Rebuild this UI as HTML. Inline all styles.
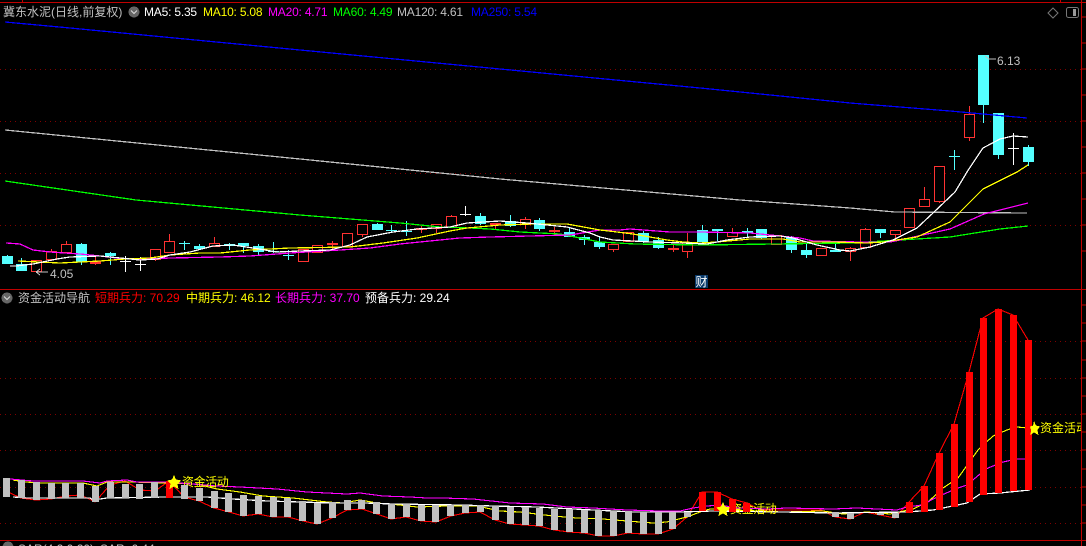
<!DOCTYPE html>
<html><head><meta charset="utf-8"><style>
html,body{margin:0;padding:0;background:#000;width:1086px;height:546px;overflow:hidden}
svg{display:block;position:absolute;left:0;top:0}
text{font-family:"Liberation Sans","WenQuanYi Zen Hei","Noto Sans CJK SC",sans-serif;font-size:12px}
.l{fill:none;stroke-linejoin:miter;stroke-width:1.25}
.m{letter-spacing:-.2px}
.s{letter-spacing:-.4px}
</style></head><body>
<svg width="1086" height="546" viewBox="0 0 1086 546" xmlns="http://www.w3.org/2000/svg" shape-rendering="crispEdges">
<rect width="1086" height="546" fill="#000"/>
<!-- grid -->
<path d="M0 69.5H1081M0 121.5H1081M0 173.5H1081M0 225.5H1081M0 341.5H1081M0 378.5H1081M0 414.5H1081M0 450.5H1081M0 487.5H1081M0 523.5H1081" stroke="#800000" stroke-dasharray="1 4" fill="none"/>
<!-- red candles -->
<path fill="none" stroke="#ff3232" stroke-width="1.3" d="M51.5 249V251M51.5 259V261M66.5 241V244M155.5 259V261M169.5 234V241M214.5 237V243M362.5 234V237M436.5 228V233M451.5 215V216M525.5 217V219M525.5 224V229M613.5 249V252M687.5 233V242M687.5 251V258M732.5 228V232M732.5 236V237M850.5 247V248M850.5 251V261M865.5 228V229M895.5 234V238M909.5 227V228M924.5 187V199M924.5 206V207M939.5 201V203M969.5 106V114M969.5 137V141M95.5 256V265M332.5 241V250M421.5 226V233M495.5 225V230M554.5 227V235M673.5 245V252"/>
<path fill="#000" stroke="#ff3232" stroke-width="1.3" d="M31.5 260.5h10v11h-10zM46.5 251.5h10v8h-10zM61.5 244.5h10v8h-10zM150.5 249.5h10v10h-10zM164.5 241.5h10v11h-10zM209.5 243.5h10v3h-10zM298.5 249.5h10v12h-10zM312.5 245.5h10v7h-10zM342.5 233.5h10v13h-10zM357.5 224.5h10v10h-10zM431.5 224.5h10v4h-10zM446.5 216.5h10v11h-10zM520.5 219.5h10v5h-10zM608.5 244.5h10v5h-10zM623.5 232.5h10v9h-10zM682.5 242.5h10v9h-10zM727.5 232.5h10v4h-10zM771.5 235.5h10v9h-10zM816.5 248.5h10v7h-10zM845.5 248.5h10v3h-10zM860.5 229.5h10v18h-10zM890.5 230.5h10v4h-10zM904.5 208.5h10v19h-10zM919.5 199.5h10v7h-10zM934.5 166.5h10v35h-10zM964.5 114.5h10v23h-10z"/>
<path fill="#ff3232" d="M90 261h11v3h-11zM327 243h11v2h-11zM416 228h11v2h-11zM490 223h11v2h-11zM549 230h11v2h-11zM668 248h11v2h-11z"/>
<!-- cyan candles -->
<path fill="none" stroke="#54ffff" stroke-width="1.3" d="M7.5 255V256M21.5 258V264M81.5 243V265M110.5 252V265M184.5 241V250M199.5 244V249M229.5 243V250M243.5 243V253M258.5 244V255M273.5 242V253M288.5 250V260M377.5 223V230M391.5 225V233M406.5 221V236M480.5 213V225M510.5 215V227M539.5 218V231M569.5 227V237M584.5 235V245M599.5 237V249M643.5 231V243M658.5 237V249M702.5 225V243M717.5 231V241M747.5 228V237M761.5 229V239M791.5 236V253M806.5 244V258M835.5 244V252M880.5 233V238M954.5 150V170M983.5 105V123M998.5 155V159M1028.5 145V166M179 243.5h11M268 251.5h11M283 255.5h11M386 230.5h11M401 231.5h11M949 156.5h11"/>
<path fill="#54ffff" d="M2 256h11v8h-11zM16 264h11v7h-11zM76 244h11v18h-11zM105 253h11v3h-11zM194 246h11v3h-11zM224 244h11v2h-11zM238 243h11v3h-11zM253 246h11v6h-11zM372 224h11v6h-11zM475 216h11v8h-11zM505 221h11v5h-11zM534 220h11v9h-11zM564 232h11v5h-11zM579 237h11v3h-11zM594 242h11v5h-11zM638 233h11v9h-11zM653 240h11v8h-11zM697 230h11v12h-11zM712 229h11v2h-11zM742 231h11v2h-11zM756 229h11v9h-11zM786 237h11v13h-11zM801 250h11v5h-11zM830 250h11v2h-11zM875 229h11v4h-11zM978 55h11v50h-11zM993 113h11v42h-11zM1023 147h11v15h-11z"/>
<!-- white dojis -->
<path fill="none" stroke="#fff" stroke-width="1.3" d="M125.5 256V272M120 261.5h11M140.5 257V271M135 264.5h11M465.5 206V216M460 214.5h11M1013.5 133V165M1008 148.5h11"/>
<!-- MA lines main -->
<polyline class="l" stroke="#0000ff" points="5,22 70,28 300,50 500,69 700,88 850,103 950,111 1027,118"/>
<polyline class="l" stroke="#c0c0c0" points="5,130 300,159 500,179 740,200 850,208 895,212 1027,213"/>
<polyline class="l" stroke="#00ff00" points="5,181 136,200 300,215 350,219 400,223 440,227 470,228 490,229 520,232 560,234 600,242 635,244 700,245 850,243 900,240 950,237 1000,229 1028,226"/>
<polyline class="l" stroke="#ff00ff" points="6,243 20,244 33,250 50,252 80,254 100,256 125,259 150,259 170,258 220,257 250,256 290,253 340,250 370,248 400,244 430,241 460,238 490,237 530,236 570,235 600,230 620,230 630,229 670,232 700,232 750,233 800,238 813,241 860,242 890,242 900,240 950,229 984,214 1028,203"/>
<polyline class="l" stroke="#ffff00" points="18,261 60,263 100,261 125,259 150,258 170,255 200,253 220,253 250,250 290,248 350,247 383,243 417,238 450,231 467,228 500,225 533,224 567,224 600,230 617,232 633,234 667,240 683,242 700,243 717,242 750,239 783,239 800,242 833,242 867,243 883,242 917,237 950,222 967,205 983,189 1017,172 1028,165"/>
<polyline class="l" stroke="#ffffff" points="10,266 16,266 33,264 57,259 70,257 100,256 120,258 140,260 157,259 170,255 190,252 213,246 233,245 253,248 277,252 300,251 330,250 350,245 367,237 393,232 417,229 450,227 467,223 500,221 527,223 567,227 590,233 600,237 613,240 633,241 650,242 683,243 707,244 727,240 750,237 780,236 793,238 817,245 840,250 850,251 870,247 893,240 917,228 933,213 955,192 967,172 983,148 1000,139 1013,136 1028,137"/>
<!-- annotations -->
<path fill="none" stroke="#c0c0c0" d="M985 56l4 3h7"/>
<text x="997" y="65" fill="#c0c0c0">6.13</text>
<path fill="none" stroke="#c0c0c0" d="M36 272h12M36 272l4-3M36 272l4 3"/>
<text x="50" y="278" fill="#c0c0c0">4.05</text>
<rect x="695" y="275" width="13" height="13" fill="#0a3a6a"/>
<text x="695.5" y="286" fill="#fff">财</text>
<!-- lower pane lines (behind bars) -->
<polyline class="l" stroke="#ff0000" style="stroke-width:1.1" points="10,493 21,498 36,500 51,499 66,496 81,495 95,502 110,485 125,481 140,490 155,491 169,481 184,497 199,501 214,508 229,512 243,516 258,514 273,517 288,517 303,521 317,524 332,518 347,510 362,509 377,514 391,519 406,517 421,521 436,522 451,516 465,513 480,512 495,520 510,524 525,525 539,526 554,530 569,532 584,533 599,536 613,536 628,533 643,534 658,534 673,529 687,517 702,492 717,492 732,499 747,503 761,510 776,510 791,510 806,510 821,510 835,517 850,519 865,512 880,515 895,518 909,502 924,486 939,453 954,424 969,372 983,318 998,309 1013,315 1028,340"/>
<polyline class="l" stroke="#ffff00" style="stroke-width:1.1" points="13,480 25,482 43,483 83,483 97,486 107,482 133,482 160,483 197,484 217,489 240,492 263,496 293,498 327,502 343,503 360,500 377,503 400,505 417,507 447,506 477,506 500,511 520,512 553,516 577,518 603,519 627,521 653,523 667,522 687,517 700,512 710,509 783,512 823,511 843,514 867,512 890,514 913,509 928,502 943,488 958,478 978,450 993,436 1007,430 1017,427 1028,428"/>
<polyline class="l" stroke="#ff00ff" style="stroke-width:1.1" points="10,479 33,481 83,481 100,483 107,481 127,480 137,482 167,482 217,486 240,487 277,489 307,492 347,494 360,493 383,496 410,497 427,498 443,498 473,499 510,503 543,504 567,507 593,508 627,510 660,511 680,511 693,508 707,506 720,505 737,508 767,509 787,508 833,509 857,508 897,510 907,507 922,505 937,497 958,488 967,485 980,474 988,468 1003,462 1017,459 1028,459"/>
<polyline class="l" stroke="#ffffff" points="13,497 27,498 90,498 93,500 107,498 167,497 207,497 233,499 267,501 300,502 333,503 365,503 393,504 460,505 493,506 537,507 593,510 633,512 680,512 713,511 783,512 833,513 907,512 933,510 943,508 967,503 980,494 1000,493 1030,490"/>
<!-- signal text -->
<text class="s" x="182" y="486" fill="#ffff00">资金活动</text>
<text class="s" x="730" y="513" fill="#ffff00">资金活动</text>
<text x="1040" y="432" fill="#ffff00">资金活动</text>
<!-- lower bars gray -->
<path fill="#c0c0c0" d="M3 478h7v19h-7zM18 480h7v18h-7zM33 482h7v18h-7zM48 483h7v16h-7zM62 483h7v15h-7zM77 483h7v15h-7zM92 486h7v16h-7zM107 482h7v16h-7zM122 484h7v14h-7zM136 484h7v15h-7zM151 482h7v16h-7zM181 485h7v14h-7zM196 488h7v13h-7zM211 491h7v17h-7zM225 493h7v19h-7zM240 495h7v21h-7zM255 496h7v18h-7zM270 497h7v20h-7zM284 498h7v19h-7zM299 501h7v20h-7zM314 503h7v21h-7zM329 502h7v16h-7zM344 500h7v10h-7zM358 500h7v9h-7zM373 502h7v12h-7zM388 504h7v15h-7zM403 504h7v13h-7zM418 505h7v16h-7zM432 505h7v17h-7zM447 505h7v11h-7zM462 505h7v8h-7zM477 505h7v7h-7zM492 506h7v14h-7zM507 507h7v17h-7zM522 507h7v18h-7zM536 508h7v18h-7zM551 509h7v21h-7zM566 509h7v23h-7zM581 510h7v23h-7zM595 510h7v26h-7zM610 511h7v25h-7zM625 511h7v22h-7zM640 512h7v22h-7zM655 512h7v22h-7zM669 512h7v17h-7zM684 512h7v5h-7zM832 512h7v5h-7zM847 513h7v6h-7zM877 513h7v2h-7zM892 513h7v5h-7z"/>
<!-- lower bars red -->
<path fill="#ff0000" d="M166 481h7v17h-7zM699 492h7v19h-7zM714 492h7v19h-7zM729 499h7v13h-7zM743 503h7v9h-7zM906 502h7v11h-7zM921 486h7v26h-7zM936 453h7v57h-7zM951 424h7v83h-7zM966 372h7v130h-7zM980 318h7v177h-7zM995 309h7v184h-7zM1010 315h7v176h-7zM1025 340h7v150h-7z"/>
<!-- stars -->
<polygon fill="#ffff00" points="174,475 176,479.5 181,480.5 177.5,484 178.5,489 174,486.5 169.5,489 170.5,484 167,480.5 172,479.5"/>
<polygon fill="#ffff00" points="723,502 725,506.5 730,507.5 726.5,511 727.5,516 723,513.5 718.5,516 719.5,511 716,507.5 721,506.5"/>
<polygon fill="#ffff00" points="1034,421 1036,425.5 1040,426.5 1037.5,430 1038.5,435 1034,432.5 1030.5,435 1031,430 1030,426.5 1033,425.5"/>
<!-- frame -->
<rect x="1082" y="0" width="4" height="546" fill="#000"/>
<path fill="none" stroke="#c00000" d="M0 2.5H1086M22.5 0V2M1060.5 0V2M0 289.5H1086M0 540.5H1086M1081.5 0V546M1082 69h4M1082 95h4M1082 121h4M1082 147h4M1082 173h4M1082 199h4M1082 225h4M1082 251h4M1082 341h4M1082 360h4M1082 378h4M1082 396h4M1082 414h4M1082 432h4M1082 450h4M1082 469h4M1082 487h4M1082 505h4M1082 523h4M1082 43h4M1082 17h4M1082 323h4M1082 305h4"/>
<!-- header -->
<text x="3" y="16" fill="#c0c0c0">冀东水泥(日线,前复权)</text>
<circle cx="134" cy="12" r="5.5" fill="#666"/>
<path d="M131 10.5l3 3 3-3" stroke="#ddd" fill="none" shape-rendering="auto"/>
<text class="m" x="144" y="16" fill="#fff">MA5: 5.35</text>
<text class="m" x="203" y="16" fill="#ffff00">MA10: 5.08</text>
<text class="m" x="268" y="16" fill="#ff00ff">MA20: 4.71</text>
<text class="m" x="333" y="16" fill="#00ff00">MA60: 4.49</text>
<text class="m" x="397" y="16" fill="#c0c0c0">MA120: 4.61</text>
<text class="m" x="471" y="16" fill="#0000ff">MA250: 5.54</text>
<path d="M1053 8l5 5-5 5-5-5z" stroke="#777" fill="none" shape-rendering="auto"/>
<rect x="1066.5" y="7.5" width="12" height="10" rx="2" stroke="#777" fill="none" shape-rendering="auto"/>
<rect x="1073" y="9" width="3" height="7" fill="#999"/>
<circle cx="7" cy="298" r="5.5" fill="#666"/>
<path d="M4 296.5l3 3 3-3" stroke="#ddd" fill="none" shape-rendering="auto"/>
<text x="18" y="302" fill="#c0c0c0">资金活动导航</text>
<text x="95" y="302" fill="#ff0000">短期兵力: 70.29</text>
<text x="186" y="302" fill="#ffff00">中期兵力: 46.12</text>
<text x="275" y="302" fill="#ff00ff">长期兵力: 37.70</text>
<text x="365" y="302" fill="#fff">预备兵力: 29.24</text>
<circle cx="8" cy="547" r="5.5" fill="#666"/>
<text x="18" y="553" fill="#c0c0c0">SAR(4,2,0.20)</text>
<text x="100" y="553" fill="#c0c0c0">SAR: 6.44</text>
</svg>
</body></html>
